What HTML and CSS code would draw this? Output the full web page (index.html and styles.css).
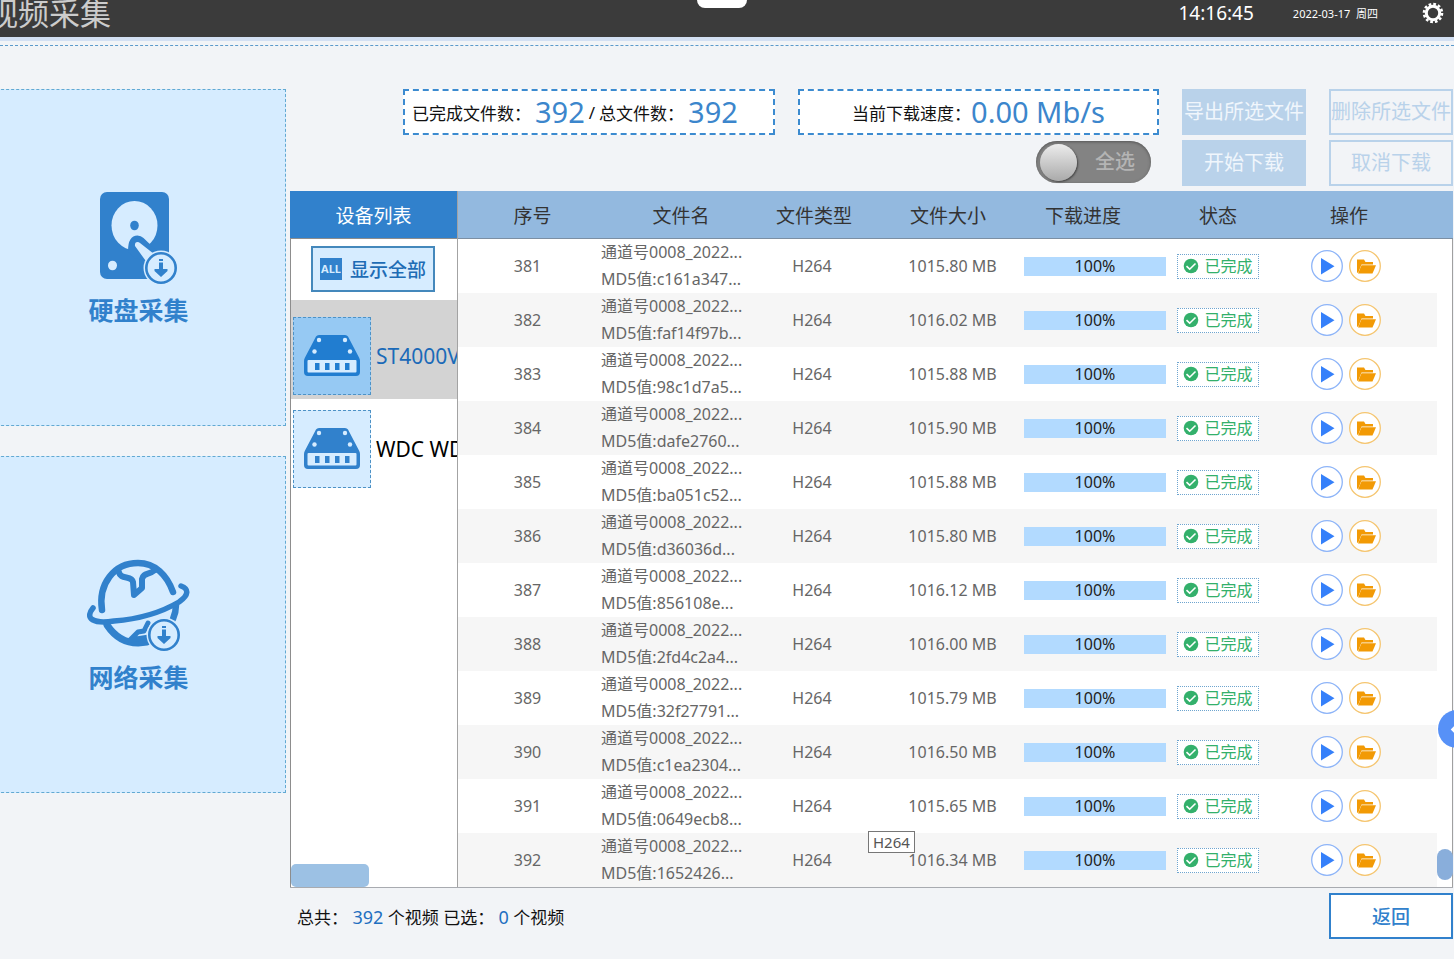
FILE: index.html
```html
<!DOCTYPE html>
<html lang="zh-CN">
<head>
    <meta charset="UTF-8">
    <meta name="viewport" content="width=device-width, initial-scale=1.0">
    <title>视频采集</title>
    <link rel="stylesheet" href="styles.css">
</head>
<body>
    <svg class="sprite" aria-hidden="true">
        <symbol id="icon-badge" viewBox="0 0 36 36">
            <circle cx="18" cy="18" r="17.5" fill="#d6ecff"/>
            <circle cx="18" cy="18" r="14.7" fill="#d6ecff" stroke="#3181cc" stroke-width="2.6"/>
            <path d="M16 9h4v2h-4zM16 12.5h4V19h4.5v2L18 27l-6.500-6v-2H16z" fill="#3181cc"/>
        </symbol>
        <symbol id="icon-device" viewBox="0 0 56 42">
            <path d="M12 1.500Q13 0 15 0H41Q43 0 44 1.500L55 22.500Q56 24 56 26V37Q56 41 52 41H4Q0 41 0 37V26Q0 24 1 22.500Z" fill="currentColor"/>
            <rect x="3.500" y="25" width="49" height="12.500" rx="1" class="device-slot"/>
            <g class="device-slot">
                <circle cx="15" cy="5" r="2.200"/><circle cx="41" cy="5" r="2.200"/>
                <circle cx="10.500" cy="16.500" r="2.200"/><circle cx="46" cy="16.500" r="2.200"/>
            </g>
            <path d="M11 28h4.500v7H11zM21 28h4.500v7H21zM31 28h4.500v7H31zM41 28h4.500v7H41z" fill="currentColor"/>
        </symbol>
        <symbol id="icon-play" viewBox="0 0 32 32">
            <circle cx="16" cy="16" r="15.300" fill="#fff" stroke="#8db4f8" stroke-width="1.300"/>
            <path d="M10 8L23.500 16.200L10 24.500z" fill="#3580fa"/>
        </symbol>
        <symbol id="icon-folder" viewBox="0 0 32 32">
            <circle cx="16" cy="16" r="15.300" fill="#fff" stroke="#f5c56f" stroke-width="1.300"/>
            <path d="M8 23V9.500h7l1.500 2.500H24v2.500H12.500L9.500 22z" fill="#f29a05"/>
            <path d="M12.500 15.200H27L23.500 23.500H9z" fill="#f29a05"/>
        </symbol>
        <symbol id="icon-check" viewBox="0 0 16 16">
            <circle cx="8" cy="8" r="7.300" fill="#33b06b"/>
            <path d="M3.500 8.200l3.200 3 5.800-5.700" fill="none" stroke="#fff" stroke-width="1.600"/>
        </symbol>
    </svg>

    <header class="topbar">
        <h1 class="title">视频采集</h1>
        <div class="pull-tab"></div>
        <time class="clock">14:16:45</time>
        <span class="date">2022-03-17&nbsp; 周四</span>
        <button class="settings" aria-label="设置">
            <svg viewBox="0 0 22 22" width="22" height="22">
                <circle cx="11" cy="11" r="6.700" fill="none" stroke="#fff" stroke-width="3"/>
                <circle cx="11" cy="11" r="9" fill="none" stroke="#fff" stroke-width="2.600" stroke-dasharray="2.700 2.012"/>
            </svg>
        </button>
    </header>

    <main class="page">
        <nav class="modes">
            <button class="mode">
                <svg viewBox="0 0 78 94" width="78" height="94">
                    <rect x="0" y="0" width="69" height="87" rx="7" fill="#3181cc"/>
                    <ellipse cx="34.500" cy="33.500" rx="23" ry="24.500" fill="#d6ecff"/>
                    <ellipse cx="34.500" cy="33.500" rx="4.300" ry="4.800" fill="#3181cc"/>
                    <path d="M28 59Q28 43.500 37.500 43.500Q41 43.500 43.500 46L57 59L52 70L34 66Z" fill="#3181cc"/>
                    <path d="M35 54Q34.500 50 37.500 50Q39 50 40 51L54 62L48 72Z" fill="#d6ecff"/>
                    <ellipse cx="12.500" cy="73.500" rx="4.500" ry="4.800" fill="#d6ecff"/>
                    <use href="#icon-badge" x="43" y="58" width="36" height="36"/>
                </svg>
                <span>硬盘采集</span>
            </button>
            <button class="mode">
                <svg viewBox="0 0 104 94" width="104" height="94">
                    <g fill="none" stroke="#3181cc" stroke-width="6.500" stroke-linecap="round" stroke-linejoin="round">
                        <path d="M15 51C11 25 27 4 51 4C68 4 80 16 86 33"/>
                        <path d="M20 66C28 78 39 84 51 84L60 83" stroke-width="7"/>
                        <path d="M89 46Q89 53 86 60"/>
                        <path d="M6 49C-3 60 7 65 27 62C53 60 75 53 92 43C102 36 102 30 94 27" stroke-width="5.500"/>
                        <path d="M32 13C33 21 45 16 46 23L47 36L55 29V20C56 14 62 16 68 11" stroke-width="6"/>
                        <path d="M61 64L57 72L51 73L43 81L62 78" stroke-width="5"/>
                    </g>
                    <use href="#icon-badge" x="59" y="58" width="36" height="36"/>
                </svg>
                <span>网络采集</span>
            </button>
        </nav>

        <section class="content">
            <div class="toolbar">
                <div class="stat">已完成文件数：<b>392</b><i>/</i>总文件数：<b>392</b></div>
                <div class="stat stat-center">当前下载速度：<b>0.00 Mb/s</b></div>
                <button class="btn btn-fill" disabled>导出所选文件</button>
                <button class="btn btn-line" disabled>删除所选文件</button>
                <label class="toggle">
                    <input type="checkbox">
                    <span class="knob"></span>
                    <span>全选</span>
                </label>
                <button class="btn btn-fill" disabled>开始下载</button>
                <button class="btn btn-line" disabled>取消下载</button>
            </div>

            <div class="panel">
                <aside class="devices">
                    <h2>设备列表</h2>
                    <div class="device-list">
                        <button class="show-all"><span class="all">ALL</span>显示全部</button>
                        <button class="device selected">
                            <span class="tile"><svg width="56" height="42"><use href="#icon-device"/></svg></span>
                            <span>ST4000V</span>
                        </button>
                        <button class="device">
                            <span class="tile"><svg width="56" height="42"><use href="#icon-device"/></svg></span>
                            <span>WDC WD</span>
                        </button>
                        <div class="h-thumb"></div>
                    </div>
                </aside>
                <div class="files">
                    <table>
                        <colgroup>
                            <col class="c-no"><col class="c-name"><col class="c-type"><col class="c-size">
                            <col class="c-progress"><col class="c-state"><col class="c-action"><col class="c-scroll">
                        </colgroup>
                        <thead>
                            <tr>
                                <th class="h-no">序号</th>
                                <th class="h-name">文件名</th>
                                <th class="h-type">文件类型</th>
                                <th>文件大小</th>
                                <th class="h-progress">下载进度</th>
                                <th>状态</th>
                                <th class="h-action">操作</th>
                                <th></th>
                            </tr>
                        </thead>
                        <tbody id="rows"></tbody>
                    </table>
                    <div class="v-thumb"></div>
                    <div class="tooltip" role="tooltip">H264</div>
                </div>
            </div>

            <footer class="summary">
                <p>总共： <b>392</b> 个视频 已选： <b>0</b> 个视频</p>
                <button class="back">返回</button>
            </footer>
        </section>
    </main>

    <button class="drawer" aria-label="展开">
        <svg viewBox="0 0 38 38" width="38" height="38"><path d="M20 14l-5.500 5.500 5.500 5.500" fill="none" stroke="#fff" stroke-width="2.500"/></svg>
    </button>

    <script>
        const files = [
            [381, 'c161a347', '1015.80'],
            [382, 'faf14f97b', '1016.02'],
            [383, '98c1d7a5', '1015.88'],
            [384, 'dafe2760', '1015.90'],
            [385, 'ba051c52', '1015.88'],
            [386, 'd36036d', '1015.80'],
            [387, '856108e', '1016.12'],
            [388, '2fd4c2a4', '1016.00'],
            [389, '32f27791', '1015.79'],
            [390, 'c1ea2304', '1016.50'],
            [391, '0649ecb8', '1015.65'],
            [392, '1652426', '1016.34']
        ];

        document.getElementById('rows').innerHTML = files.map(([no, md5, size]) => `
            <tr>
                <td>${no}</td>
                <td class="name">通道号0008_2022...<br>MD5值:${md5}...</td>
                <td>H264</td>
                <td class="size">${size} MB</td>
                <td><div class="progress" role="progressbar" aria-valuenow="100">100%</div></td>
                <td><span class="state"><svg width="16" height="16"><use href="#icon-check"/></svg>已完成</span></td>
                <td class="actions">
                    <button aria-label="播放"><svg width="32" height="32"><use href="#icon-play"/></svg></button>
                    <button aria-label="打开文件夹"><svg width="32" height="32"><use href="#icon-folder"/></svg></button>
                </td>
                <td class="gutter"></td>
            </tr>`).join('');
    </script>
</body>
</html>
```
FILE: styles.css
```css
* {
    box-sizing: border-box;
}
body {
    margin: 0;
    min-height: 100vh;
    overflow: hidden;
    background-color: #f2f4f7;
    color: #111;
    font-family: "Noto Sans", "Noto Sans CJK SC", sans-serif;
    font-size: 17px;
}
h1, h2, p {
    margin: 0;
    font-weight: 400;
}
b, i {
    font-weight: 400;
    font-style: normal;
}
button {
    padding: 0;
    border: none;
    background: none;
    font-family: inherit;
    white-space: nowrap;
    cursor: pointer;
}
svg {
    display: block;
}
.sprite {
    position: absolute;
    width: 0;
    height: 0;
}

/* 顶栏 */
.topbar {
    display: flex;
    align-items: center;
    height: 41px;
    padding: 0 10px 11px 0;
    border-bottom: 4px solid #d3e0f3;
    background-color: #3b3b3b;
    color: #fff;
    position: relative;
}
.title {
    margin-left: -13px;
    margin-right: auto;
    color: #ccc;
    font-size: 31px;
    line-height: 26px;
}
.pull-tab {
    position: absolute;
    top: 0;
    left: 50%;
    width: 50px;
    height: 8px;
    margin-left: -30px;
    border-radius: 0 0 8px 8px;
    background-color: #fff;
}
.clock {
    margin-right: 39px;
    font-size: 19px;
}
.date {
    margin-right: 44px;
    font-size: 11px;
}

/* 主体 */
.page {
    display: grid;
    grid-template-columns: 286px 1fr;
    column-gap: 4px;
    margin-top: 4px;
    padding: 43px 1px 0 0;
    border-top: 1px dashed #5b9acb;
}
.modes {
    display: flex;
    flex-direction: column;
    gap: 30px;
    margin-left: -9px;
}
.mode {
    display: flex;
    flex-direction: column;
    align-items: center;
    height: 337px;
    padding-top: 102px;
    border: 1px dashed #62a9d2;
    background-color: #d6ecff;
    color: #3181cc;
    font-size: 25px;
    font-weight: 700;
}
.mode span {
    margin-top: 6px;
    line-height: 36px;
}

/* 工具栏 */
.toolbar {
    display: grid;
    grid-template-columns: 372px 361px 124px 124px;
    grid-template-rows: 46px 46px;
    gap: 5px 23px;
    justify-content: end;
}
.stat {
    display: flex;
    align-items: center;
    padding-left: 7px;
    border: 2px dashed #3c8bd0;
    background-color: #fff;
    white-space: nowrap;
}
.stat b {
    margin-left: 4px;
    color: #3c86cc;
    font-size: 29px;
    line-height: 40px;
}
.stat i {
    margin: 0 4px;
}
.stat-center {
    justify-content: center;
    padding-left: 0;
}
.stat-center b {
    margin-left: 0;
}
.btn {
    display: flex;
    align-items: center;
    justify-content: center;
    padding-bottom: 3px;
    font-size: 20px;
}
.btn-fill {
    background-color: #b9d2ea;
    color: #f0f6fc;
}
.btn-line {
    border: 2px solid #b9d2ea;
    color: #b9d2ea;
}
.toggle {
    grid-column: 2;
    justify-self: end;
    display: flex;
    align-items: center;
    gap: 18px;
    width: 115px;
    height: 42px;
    margin: 1px 8px 0 0;
    padding-left: 4px;
    border-radius: 21px;
    background-color: #838383;
    box-shadow: inset 0 1px 3px #555;
    color: #b4b4b4;
    font-size: 20px;
    font-weight: 500;
    line-height: 26px;
    position: relative;
}
.toggle input {
    position: absolute;
    inset: 0;
    margin: 0;
    opacity: 0;
}
.knob {
    width: 37px;
    height: 37px;
    border-radius: 50%;
    background: linear-gradient(#ececec, #aaa);
    box-shadow: 1px 1px 2px #444;
}

/* 设备列表 */
.panel {
    display: grid;
    grid-template-columns: 167px 1fr;
    margin-top: 5px;
    border-bottom: 1px solid #a8abb0;
}
.devices {
    display: flex;
    flex-direction: column;
    min-width: 0;
}
.devices h2 {
    height: 47px;
    padding-top: 2px;
    background-color: #3181cc;
    color: #fff;
    font-size: 19px;
    line-height: 46px;
    text-align: center;
}
.device-list {
    flex: 1;
    display: flex;
    flex-direction: column;
    overflow: hidden;
    border-top: 1px solid #8d8d8d;
    border-left: 1px solid #8d8d8d;
    background-color: #fff;
}
.show-all {
    display: flex;
    align-items: center;
    justify-content: center;
    gap: 8px;
    flex: none;
    width: 124px;
    height: 46px;
    margin: 7px 0 8px 20px;
    border: 2px solid #4488bc;
    background-color: #d6ecff;
    color: #1e6cb5;
    font-size: 19px;
    font-weight: 500;
}
.all {
    width: 22px;
    background-color: #3181cc;
    color: #d6ecff;
    font-size: 11px;
    font-weight: 700;
    line-height: 22px;
}
.device {
    display: flex;
    align-items: center;
    gap: 5px;
    padding: 11px 0 4px 2px;
    color: #000;
    font-size: 21px;
}
.device.selected {
    padding-top: 17px;
    background-color: #d3d3d3;
    color: #1a6ab8;
}
.tile {
    display: flex;
    flex: none;
    align-items: center;
    justify-content: center;
    width: 78px;
    height: 78px;
    border: 1px dashed #4d92c6;
    background-color: #d6ecff;
    color: #3181cc;
}
.selected .tile {
    background-color: #96c9f3;
    color: #217dd0;
}
.device-slot {
    fill: #d6ecff;
}
.h-thumb {
    width: 78px;
    height: 23px;
    margin-top: auto;
    border-radius: 5px;
    background-color: #9cc1e4;
}

/* 文件表格 */
.files {
    position: relative;
    border-left: 1px solid #a3a3a3;
}
table {
    width: 100%;
    height: 696px;
    table-layout: fixed;
    border-collapse: separate;
    border-spacing: 0;
    background-color: #fff;
    color: #666;
    font-size: 16px;
    line-height: 27px;
    text-align: center;
}
.c-no { width: 139px; }
.c-name { width: 150px; }
.c-type { width: 130px; }
.c-size { width: 142px; }
.c-progress { width: 152px; }
.c-state { width: 94px; }
.c-action { width: 172px; }
.c-scroll { width: 16px; }
th, td {
    padding: 0;
}
th {
    height: 48px;
    padding-top: 3px;
    border-bottom: 1px solid #7c8fa3;
    background-color: #93b9df;
    color: #333;
    font-size: 19px;
    font-weight: 400;
}
.h-no { padding-left: 10px; }
.h-name { padding-left: 18px; }
.h-type { padding-left: 4px; }
.h-progress { padding-right: 24px; }
.h-action { padding-right: 4px; }
tbody tr:nth-child(even) td {
    background-color: #f6f6f6;
}
tbody tr .gutter,
tbody tr:nth-child(even) .gutter {
    border-right: 1px solid #a0a0a0;
    background-color: #fff;
}
.name {
    padding-left: 4px;
    text-align: left;
    white-space: nowrap;
}
.size {
    padding-left: 9px;
}
.progress {
    height: 19px;
    margin: 0 5px;
    background-color: #b2daff;
    color: #222;
    line-height: 19px;
}
.state {
    display: flex;
    align-items: center;
    justify-content: center;
    gap: 5px;
    height: 25px;
    margin: 0 6px;
    border: 1px dotted #6fa5cf;
    background-color: #fff;
    color: #33b06b;
}
.actions {
    padding-right: 10px;
}
.actions button {
    margin: 0 1px;
    vertical-align: middle;
}
.v-thumb {
    position: absolute;
    right: 0;
    bottom: 7px;
    width: 16px;
    height: 31px;
    border-radius: 8px;
    background-color: #89aedb;
}
.tooltip {
    position: absolute;
    left: 410px;
    bottom: 34px;
    padding: 0 4px;
    border: 1px solid #777;
    background-color: #fff;
    color: #555;
    font-size: 15px;
    line-height: 20px;
}

/* 底部 */
.summary {
    display: flex;
    align-items: center;
    justify-content: space-between;
    padding: 5px 0 0 7px;
}
.summary b {
    color: #1f6fc0;
    font-size: 18px;
}
.back {
    width: 124px;
    height: 46px;
    border: 2px solid #3181cc;
    background-color: #fff;
    color: #3181cc;
    font-size: 19px;
    font-weight: 500;
}
.drawer {
    position: fixed;
    top: 710px;
    right: -22px;
    border-radius: 50%;
    background-color: #5791f7;
}
```
